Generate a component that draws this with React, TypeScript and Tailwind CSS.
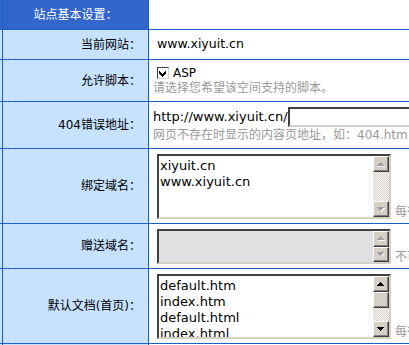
import type { ReactNode } from 'react'

// Classic 3D scrollbar button with a tiny pixel arrow
function ScrollBtn({ dir, enabled }: { dir: 'up' | 'down'; enabled?: boolean }) {
  const d =
    dir === 'up'
      ? 'M3 0h1v1h1v1h1v1h1v1H0V3h1V2h1V1h1z'
      : 'M0 0h7v1H6v1H5v1H4v1H3V3H2V2H1V1H0z'
  return (
    <div className="flex-1 min-h-0 flex items-center justify-center bg-[#d4d0c8] border border-t-white border-l-white border-b-[#404040] border-r-[#404040] shadow-[inset_-1px_-1px_0_#808080]">
      <svg width="8" height="5" viewBox="0 0 8 5" shapeRendering="crispEdges">
        {!enabled && <path d={d} transform="translate(1 1)" fill="#ffffff" />}
        <path d={d} fill={enabled ? '#000000' : '#a0a0a0'} />
      </svg>
    </div>
  )
}

function Track() {
  return (
    <div className="flex-[2] bg-[repeating-conic-gradient(#d4d0c8_0%_25%,#ffffff_0%_50%)] bg-[length:2px_2px]" />
  )
}

function TextBox({
  lines,
  disabled,
  thumb,
  tall,
}: {
  lines: string[]
  disabled?: boolean
  thumb?: boolean
  tall?: boolean
}) {
  return (
    <div
      className={`shrink-0 w-[234px] flex border-2 border-t-[#404040] border-l-[#404040] border-r-[#d4d0c8] border-b-[#d4d0c8] ${
        tall ? 'h-[65px]' : 'h-[35px]'
      } ${disabled ? 'bg-[#e1e1e1]' : 'bg-white'}`}
    >
      <div className="flex-1 min-w-0 overflow-hidden pl-[1px] pt-[2px] text-[13px] leading-[16px] text-black">
        {lines.map((l) => (
          <div key={l}>{l}</div>
        ))}
      </div>
      <div className="w-[16px] flex flex-col">
        {tall ? (
          <>
            <div className="h-[16px] flex">
              <ScrollBtn dir="up" enabled={thumb} />
            </div>
            {thumb && (
              <div className="h-[16px] bg-[#d4d0c8] border border-t-white border-l-white border-b-[#404040] border-r-[#404040] shadow-[inset_-1px_-1px_0_#808080]" />
            )}
            <Track />
            <div className="h-[16px] flex">
              <ScrollBtn dir="down" enabled={thumb} />
            </div>
          </>
        ) : (
          <>
            <ScrollBtn dir="up" />
            <ScrollBtn dir="down" />
          </>
        )}
      </div>
    </div>
  )
}

function Row({ h, label, children }: { h: string; label: string; children: ReactNode }) {
  return (
    <div className={`grid grid-cols-[2px_145px_1fr] gap-x-px ${h}`}>
      <div className="bg-[#c7e2ff]" />
      <div className="bg-[#c7e2ff] flex items-center justify-end pr-[7px] text-[12px] text-black whitespace-nowrap">
        {label}
      </div>
      <div className="bg-white overflow-hidden whitespace-nowrap">{children}</div>
    </div>
  )
}

export default function App() {
  return (
    <div className="w-[409px] h-[345px] overflow-hidden bg-[#1762c4] flex flex-col gap-y-px font-['DejaVu_Sans','Noto_Sans_CJK_SC',sans-serif]">
      {/* Header */}
      <div className="grid grid-cols-[2px_145px_1fr] gap-x-px h-[29px]">
        <div className="bg-[#3366cc]" />
        <div className="bg-[#3366cc] flex items-center justify-center text-[12px] text-white">
          站点基本设置：
        </div>
        <div className="bg-white" />
      </div>

      <Row h="h-[29px]" label="当前网站：">
        <div className="h-full flex items-center pl-2 text-[12.5px] text-black">www.xiyuit.cn</div>
      </Row>

      <Row h="h-[41px]" label="允许脚本：">
        <div className="h-full flex flex-col justify-center pl-1 text-[12px] leading-[15px]">
          <div className="flex items-center h-[15px]">
            <span className="ml-1 w-[12px] h-[12px] bg-white border border-t-[#404040] border-l-[#404040] border-r-[#d4d0c8] border-b-[#d4d0c8] flex items-center justify-center">
              <svg width="8" height="7" viewBox="0 0 8 7" shapeRendering="crispEdges">
                <path d="M7 0v3L3 7 0 4V1l3 3z" fill="#000000" />
              </svg>
            </span>
            <span className="ml-[4px] text-black">ASP</span>
          </div>
          <div className="text-[#999999]">请选择您希望该空间支持的脚本。</div>
        </div>
      </Row>

      <Row h="h-[46px]" label="404错误地址：">
        <div className="h-full flex flex-col justify-center pl-1">
          <div className="flex items-center h-[20px]">
            <span className="text-[13px] text-black">http://www.xiyuit.cn/</span>
            <span className="shrink-0 w-[200px] h-[20px] bg-white border-2 border-t-[#404040] border-l-[#404040] border-r-[#d4d0c8] border-b-[#d4d0c8]" />
          </div>
          <div className="mt-[1px] text-[12px] leading-[15px] text-[#999999]">
            网页不存在时显示的内容页地址，如：404.htm
          </div>
        </div>
      </Row>

      <Row h="h-[74px]" label="绑定域名：">
        <div className="pl-2 pt-[5px] flex items-end">
          <TextBox tall lines={['xiyuit.cn', 'www.xiyuit.cn']} />
          <span className="ml-1 text-[12px] leading-[14px] text-[#999999]">每行一个域名</span>
        </div>
      </Row>

      <Row h="h-[44px]" label="赠送域名：">
        <div className="pl-2 pt-[5px] flex items-end">
          <TextBox disabled lines={[]} />
          <span className="ml-1 text-[12px] leading-[14px] text-[#999999]">不可修改</span>
        </div>
      </Row>

      <Row h="h-[74px]" label="默认文档(首页)：">
        <div className="pl-2 pt-[5px] flex items-end">
          <TextBox tall thumb lines={['default.htm', 'index.htm', 'default.html', 'index.html']} />
          <span className="ml-1 text-[12px] leading-[14px] text-[#999999]">每行一个</span>
        </div>
      </Row>

      <div className="grid grid-cols-[2px_145px_1fr] gap-x-px h-[1px]">
        <div className="bg-[#c7e2ff]" />
        <div className="bg-[#c7e2ff]" />
        <div className="bg-white" />
      </div>
    </div>
  )
}
